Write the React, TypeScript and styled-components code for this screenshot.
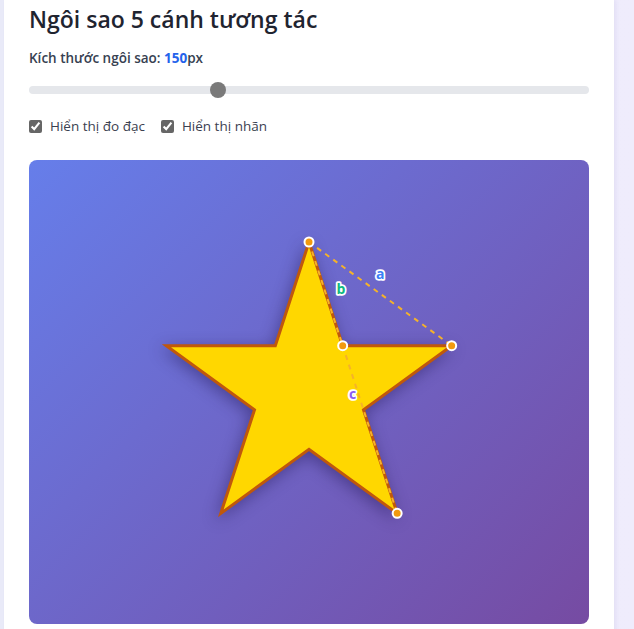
import React, { useState } from 'react';
import styled, { createGlobalStyle } from 'styled-components';

const GlobalStyle = createGlobalStyle`
  html, body {
    margin: 0;
    padding: 0;
  }
  body {
    background: linear-gradient(90deg, #e9eaf8 0%, #efecfc 100%);
    font-family: 'Open Sans', 'Noto Sans', sans-serif;
    min-height: 100vh;
    overflow: hidden;
  }
`;

const Page = styled.div`
  padding-left: 4px;
`;

const Card = styled.div`
  width: 610px;
  min-height: 640px;
  box-sizing: border-box;
  background: #ffffff;
  padding: 3px 25px 0;
  box-shadow: 2px 0 4px rgba(90, 80, 160, 0.08);
`;

const Title = styled.h1`
  margin: 0;
  font-size: 23px;
  line-height: 32px;
  font-weight: 600;
  color: #1f2430;
`;

const SizeLabel = styled.div`
  margin-top: 13px;
  font-size: 13.5px;
  line-height: 20px;
  font-weight: 600;
  color: #374151;
`;

const SizeValue = styled.span`
  color: #2563eb;
  font-weight: 700;
`;

const Slider = styled.input`
  display: block;
  width: 100%;
  margin: 14px 0 0;
  height: 16px;
  -webkit-appearance: none;
  appearance: none;
  background: transparent;
  outline: none;

  &::-webkit-slider-runnable-track {
    height: 8px;
    border-radius: 4px;
    background: #e5e7eb;
  }
  &::-webkit-slider-thumb {
    -webkit-appearance: none;
    width: 16px;
    height: 16px;
    margin-top: -4px;
    border-radius: 50%;
    background: #7a7a7a;
    border: none;
  }
`;

const Options = styled.div`
  display: flex;
  gap: 16px;
  margin-top: 18px;
`;

const Option = styled.label`
  display: flex;
  align-items: center;
  gap: 8px;
  font-size: 13.5px;
  line-height: 20px;
  color: #3b4150;
  cursor: pointer;

  input {
    margin: 0;
    width: 13px;
    height: 13px;
    accent-color: #666666;
  }
`;

const Stage = styled.div`
  margin-top: 24px;
  height: 464px;
  border-radius: 8px;
  background: linear-gradient(135deg, #667eea 0%, #764ba2 100%);
  overflow: hidden;

  svg {
    display: block;
  }
`;

const StarShape = styled.polygon`
  fill: #ffd700;
  stroke: #c0580c;
  stroke-width: 3;
  stroke-linejoin: miter;
  filter: drop-shadow(-2px 4px 8px rgba(30, 20, 80, 0.45));
`;

const Measure = styled.line`
  stroke: #f5b22a;
  stroke-width: 2;
  stroke-dasharray: 5 5;
`;

const Dot = styled.circle`
  fill: #f29a0e;
  stroke: #ffffff;
  stroke-width: 2;
`;

const Tag = styled.text<{ $color: string }>`
  font-family: 'Open Sans', sans-serif;
  font-size: 14px;
  font-weight: 700;
  fill: ${({ $color }) => $color};
  stroke: #ffffff;
  stroke-width: 3.5px;
  stroke-linejoin: round;
  paint-order: stroke;
  text-anchor: middle;
  dominant-baseline: central;
`;

const W = 560;
const H = 464;

function starPoints(cx: number, cy: number, R: number) {
  const r = R * 0.382;
  const pts: { x: number; y: number }[] = [];
  for (let i = 0; i < 10; i++) {
    const rad = i % 2 === 0 ? R : r;
    const ang = (i * Math.PI) / 5;
    pts.push({ x: cx + rad * Math.sin(ang), y: cy - rad * Math.cos(ang) });
  }
  return pts;
}

export default function App() {
  const [size, setSize] = useState(150);
  const [showMeasure, setShowMeasure] = useState(true);
  const [showLabels, setShowLabels] = useState(true);

  const cx = W / 2;
  const cy = H / 2;
  const pts = starPoints(cx, cy, size);
  const top = pts[0];
  const inner = pts[1];
  const right = pts[2];
  const bottom = pts[4];

  return (
    <>
      <GlobalStyle />
      <Page>
        <Card>
          <Title>Ngôi sao 5 cánh tương tác</Title>
          <SizeLabel>
            Kích thước ngôi sao: <SizeValue>{size}</SizeValue>px
          </SizeLabel>
          <Slider
            type="range"
            min={50}
            max={350}
            value={size}
            onChange={(e) => setSize(Number(e.target.value))}
          />
          <Options>
            <Option>
              <input
                type="checkbox"
                checked={showMeasure}
                onChange={(e) => setShowMeasure(e.target.checked)}
              />
              Hiển thị đo đạc
            </Option>
            <Option>
              <input
                type="checkbox"
                checked={showLabels}
                onChange={(e) => setShowLabels(e.target.checked)}
              />
              Hiển thị nhãn
            </Option>
          </Options>
          <Stage>
            <svg width={W} height={H} viewBox={`0 0 ${W} ${H}`}>
              <StarShape points={pts.map((p) => `${p.x},${p.y}`).join(' ')} />
              {showMeasure && (
                <g>
                  <Measure x1={top.x} y1={top.y} x2={right.x} y2={right.y} />
                  <Measure x1={top.x} y1={top.y} x2={inner.x} y2={inner.y} />
                  <Measure x1={inner.x} y1={inner.y} x2={bottom.x} y2={bottom.y} />
                  <Dot cx={top.x} cy={top.y} r={4.5} />
                  <Dot cx={right.x} cy={right.y} r={4.5} />
                  <Dot cx={inner.x} cy={inner.y} r={4.5} />
                  <Dot cx={bottom.x} cy={bottom.y} r={4.5} />
                </g>
              )}
              {showLabels && showMeasure && (
                <g>
                  <Tag $color="#3b82f6" x={(top.x + right.x) / 2} y={(top.y + right.y) / 2 - 20}>
                    a
                  </Tag>
                  <Tag $color="#10b981" x={(top.x + inner.x) / 2 + 15} y={(top.y + inner.y) / 2 - 5}>
                    b
                  </Tag>
                  <Tag $color="#8b5cf6" x={inner.x + 10} y={inner.y + 48}>
                    c
                  </Tag>
                </g>
              )}
            </svg>
          </Stage>
        </Card>
      </Page>
    </>
  );
}
